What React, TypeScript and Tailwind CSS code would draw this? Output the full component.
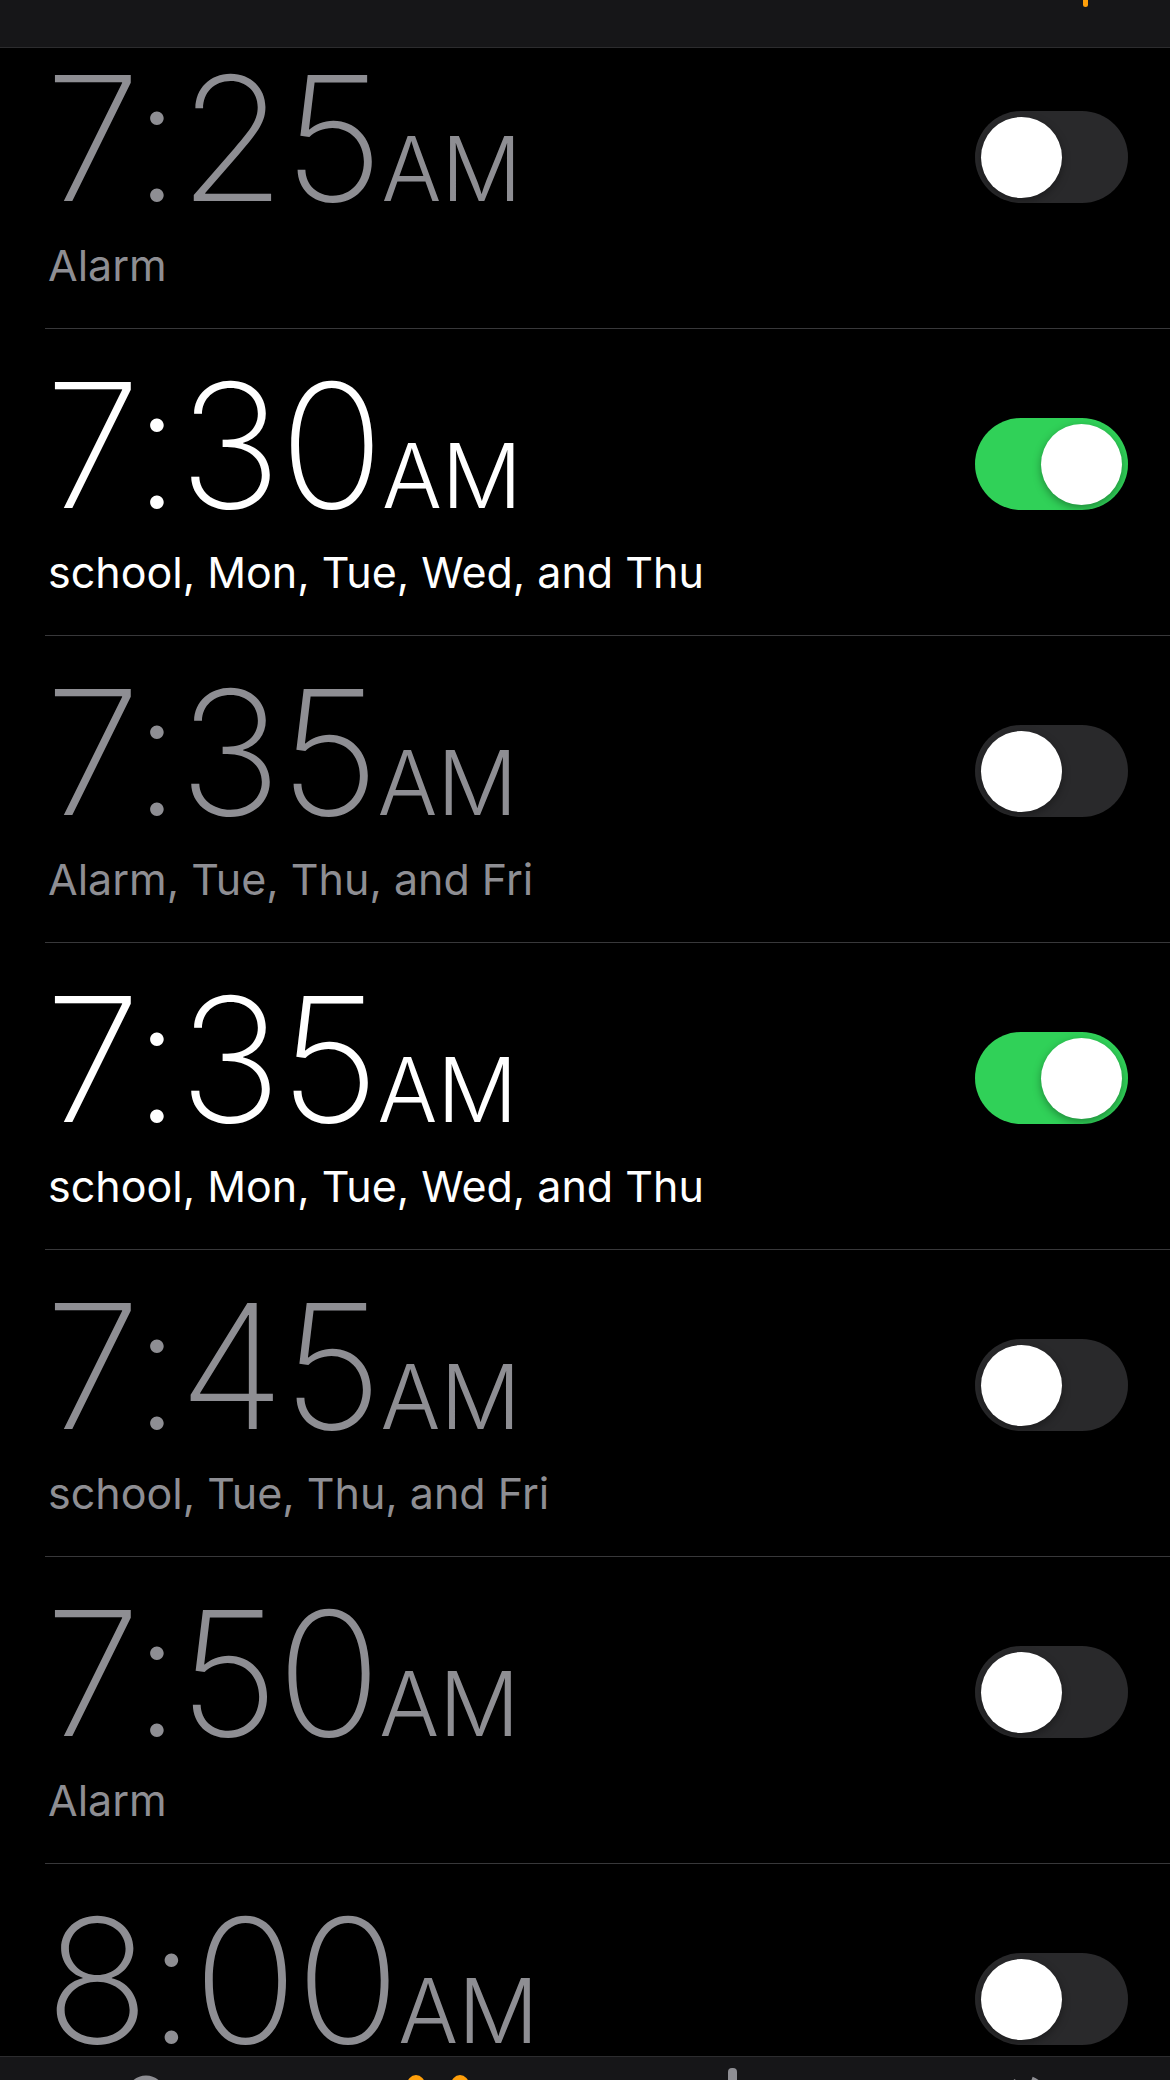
import React from "react";

type Alarm = {
  time: string;
  label: string;
  on: boolean;
};

const alarms: Alarm[] = [
  { time: "7:25", label: "Alarm", on: false },
  { time: "7:30", label: "school, Mon, Tue, Wed, and Thu", on: true },
  { time: "7:35", label: "Alarm, Tue, Thu, and Fri", on: false },
  { time: "7:35", label: "school, Mon, Tue, Wed, and Thu", on: true },
  { time: "7:45", label: "school, Tue, Thu, and Fri", on: false },
  { time: "7:50", label: "Alarm", on: false },
  { time: "8:00", label: "Alarm", on: false },
];

function Toggle({ on }: { on: boolean }) {
  return (
    <div
      className={`relative w-[153px] h-[92px] rounded-full shrink-0 ${
        on ? "bg-[#30d158]" : "bg-[#29292b]"
      }`}
    >
      <div
        className={`absolute top-[6px] w-[81px] h-[81px] rounded-full bg-white shadow-[0_3px_8px_rgba(0,0,0,0.35)] ${
          on ? "right-[6px]" : "left-[6px]"
        }`}
      />
    </div>
  );
}

function AlarmRow({ alarm }: { alarm: Alarm }) {
  const color = alarm.on ? "text-white" : "text-[#8e8e93]";
  return (
    <div className="ml-[45px] h-[307px] flex justify-between border-b border-[#38383a] box-border">
      <div className={`flex flex-col ${color}`}>
        <div className="mt-[30px] leading-none whitespace-nowrap">
          <span className="text-[173px] font-extralight tracking-[-2px]">{alarm.time}</span>
          <span className="text-[89px] font-light">AM</span>
        </div>
        <div className="mt-[19px] pl-[3px] text-[43px] leading-none whitespace-nowrap">
          {alarm.label}
        </div>
      </div>
      <div className="mt-[89px] mr-[42px]">
        <Toggle on={alarm.on} />
      </div>
    </div>
  );
}

export default function App() {
  return (
    <div
      className="w-[1170px] h-[2080px] bg-black overflow-hidden flex flex-col"
      style={{ fontFamily: "Inter, 'Noto Sans', sans-serif" }}
    >
      <header className="relative h-[48px] shrink-0 bg-[#161618] border-b border-[#2c2c2e] z-10">
        <div className="absolute left-[1083px] top-0 w-[5px] h-[7px] rounded-b-full bg-[#ff9f0a]" />
      </header>

      <main className="flex-1 overflow-hidden">
        <div className="-mt-[26px]">
          {alarms.map((a, i) => (
            <AlarmRow key={i} alarm={a} />
          ))}
        </div>
      </main>

      <nav className="relative h-[24px] shrink-0 bg-[#161618] border-t border-[#2c2c2e] overflow-hidden">
        {/* world clock */}
        <svg className="absolute left-[126px] top-[18px]" width="40" height="40" viewBox="0 0 40 40">
          <circle cx="20" cy="20" r="17" fill="none" stroke="#8e8e93" strokeWidth="5" />
        </svg>
        {/* alarm, active */}
        <svg className="absolute left-[405px] top-[14px]" width="66" height="30" viewBox="0 0 66 30">
          <ellipse cx="11" cy="14" rx="9" ry="10" fill="#ff9f0a" />
          <ellipse cx="55" cy="14" rx="9" ry="10" fill="#ff9f0a" />
        </svg>
        {/* stopwatch */}
        <div className="absolute left-[728px] top-[11px] w-[9px] h-[20px] rounded-sm bg-[#8e8e93]" />
        {/* timer */}
        <svg className="absolute left-[1006px] top-[18px]" width="40" height="40" viewBox="0 0 40 40">
          <circle cx="20" cy="20" r="17" fill="none" stroke="#8e8e93" strokeWidth="5" strokeDasharray="90 20" transform="rotate(-70 20 20)" />
        </svg>
      </nav>
    </div>
  );
}
